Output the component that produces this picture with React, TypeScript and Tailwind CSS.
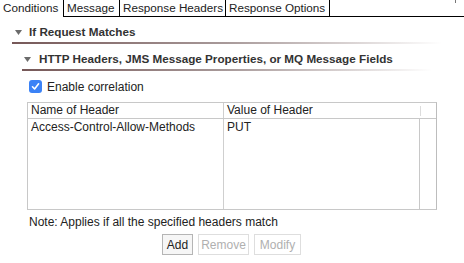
import React from "react";

const font = { fontFamily: '"Liberation Sans", Arial, Helvetica, sans-serif' };

function Tri({ className = "" }: { className?: string }) {
  return (
    <svg width="7" height="5" viewBox="0 0 7 5" className={className}>
      <polygon points="0,0 7,0 3.5,5" fill="#6b6b6b" />
    </svg>
  );
}

export default function App() {
  return (
    <div className="relative w-[464px] h-[263px] bg-white overflow-hidden text-[12px] text-[#222] whitespace-nowrap" style={font}>
      <div className="absolute left-[455px] top-0 w-px h-[3px] bg-[#777]" />
      {/* Tabs */}
      <div className="flex h-[17px] leading-[16px] text-[11.7px]">
        <div className="w-[64px] shrink-0 border-r border-black pl-[3px]">Conditions</div>
        <div className="w-[56px] shrink-0 border-r border-b border-black pl-[3px]">Message</div>
        <div className="w-[106px] shrink-0 border-r border-b border-black pl-[3px]">Response Headers</div>
        <div className="w-[104px] shrink-0 border-r border-b border-black pl-[3px]">Response Options</div>
        <div className="flex-1 border-b border-black" />
      </div>

      {/* Section 1 */}
      <div className="mt-[8px] ml-[12px]">
        <div className="flex items-center h-[14px]">
          <Tri className="ml-[3px]" />
          <span className="ml-[7px] font-bold text-[11.7px] text-[#333]">If Request Matches</span>
        </div>
        <div className="mt-[3px] h-[2px] w-[430px] bg-gradient-to-r from-[#765858] via-[#a89a9a] to-[#ffffff]" />
      </div>

      {/* Section 2 */}
      <div className="mt-[8px] ml-[22px]">
        <div className="flex items-center h-[14px]">
          <Tri className="ml-[2px]" />
          <span className="ml-[8px] font-bold text-[11.7px] text-[#333]">HTTP Headers, JMS Message Properties, or MQ Message Fields</span>
        </div>
        <div className="mt-[3px] h-[2px] w-[410px] bg-gradient-to-r from-[#765858] via-[#a89a9a] to-[#ffffff]" />
      </div>

      {/* Checkbox */}
      <div className="mt-[9px] ml-[29px] flex items-center h-[13px]">
        <div className="w-[13px] h-[13px] rounded-[3px] bg-[#3b82f6] flex items-center justify-center">
          <svg width="9" height="9" viewBox="0 0 9 9">
            <path d="M1.5 4.8 L3.6 7 L7.6 1.8" stroke="white" strokeWidth="1.6" fill="none" strokeLinecap="round" strokeLinejoin="round" />
          </svg>
        </div>
        <span className="ml-[5px]">Enable correlation</span>
      </div>

      {/* Table */}
      <div className="mt-[9px] ml-[27px] w-[410px] h-[108px] border border-[#c8c8c8] border-r-[#bdbdbd] flex flex-col">
        <div className="flex h-[16px] border-b border-[#c8c8c8] leading-[15px]">
          <div className="w-[196px] border-r border-[#cfcfcf] pl-[3px]">Name of Header</div>
          <div className="w-[196px] pl-[3px]">Value of Header</div>
          <div className="flex-1 flex items-center">
            <div className="w-px h-[10px] bg-[#dcdcdc]" />
          </div>
        </div>
        <div className="flex flex-1">
          <div className="w-[196px] border-r border-[#cfcfcf] pl-[3px] leading-[16px]">Access-Control-Allow-Methods</div>
          <div className="w-[196px] border-r border-[#c8c8c8] pl-[3px] leading-[16px]">PUT</div>
          <div className="flex-1" />
        </div>
      </div>

      <div className="mt-[5px] ml-[29px] leading-[14px]">Note: Applies if all the specified headers match</div>

      <div className="mt-[5px] ml-[162px] flex gap-[5px]">
        <div className="h-[21px] w-[31px] border border-[#b5b5b5] bg-[#f6f6f6] flex items-center justify-center">Add</div>
        <div className="h-[21px] w-[51px] border border-[#dedede] bg-white text-[#b0b0b0] flex items-center justify-center">Remove</div>
        <div className="h-[21px] w-[47px] border border-[#dedede] bg-white text-[#b0b0b0] flex items-center justify-center">Modify</div>
      </div>
    </div>
  );
}
